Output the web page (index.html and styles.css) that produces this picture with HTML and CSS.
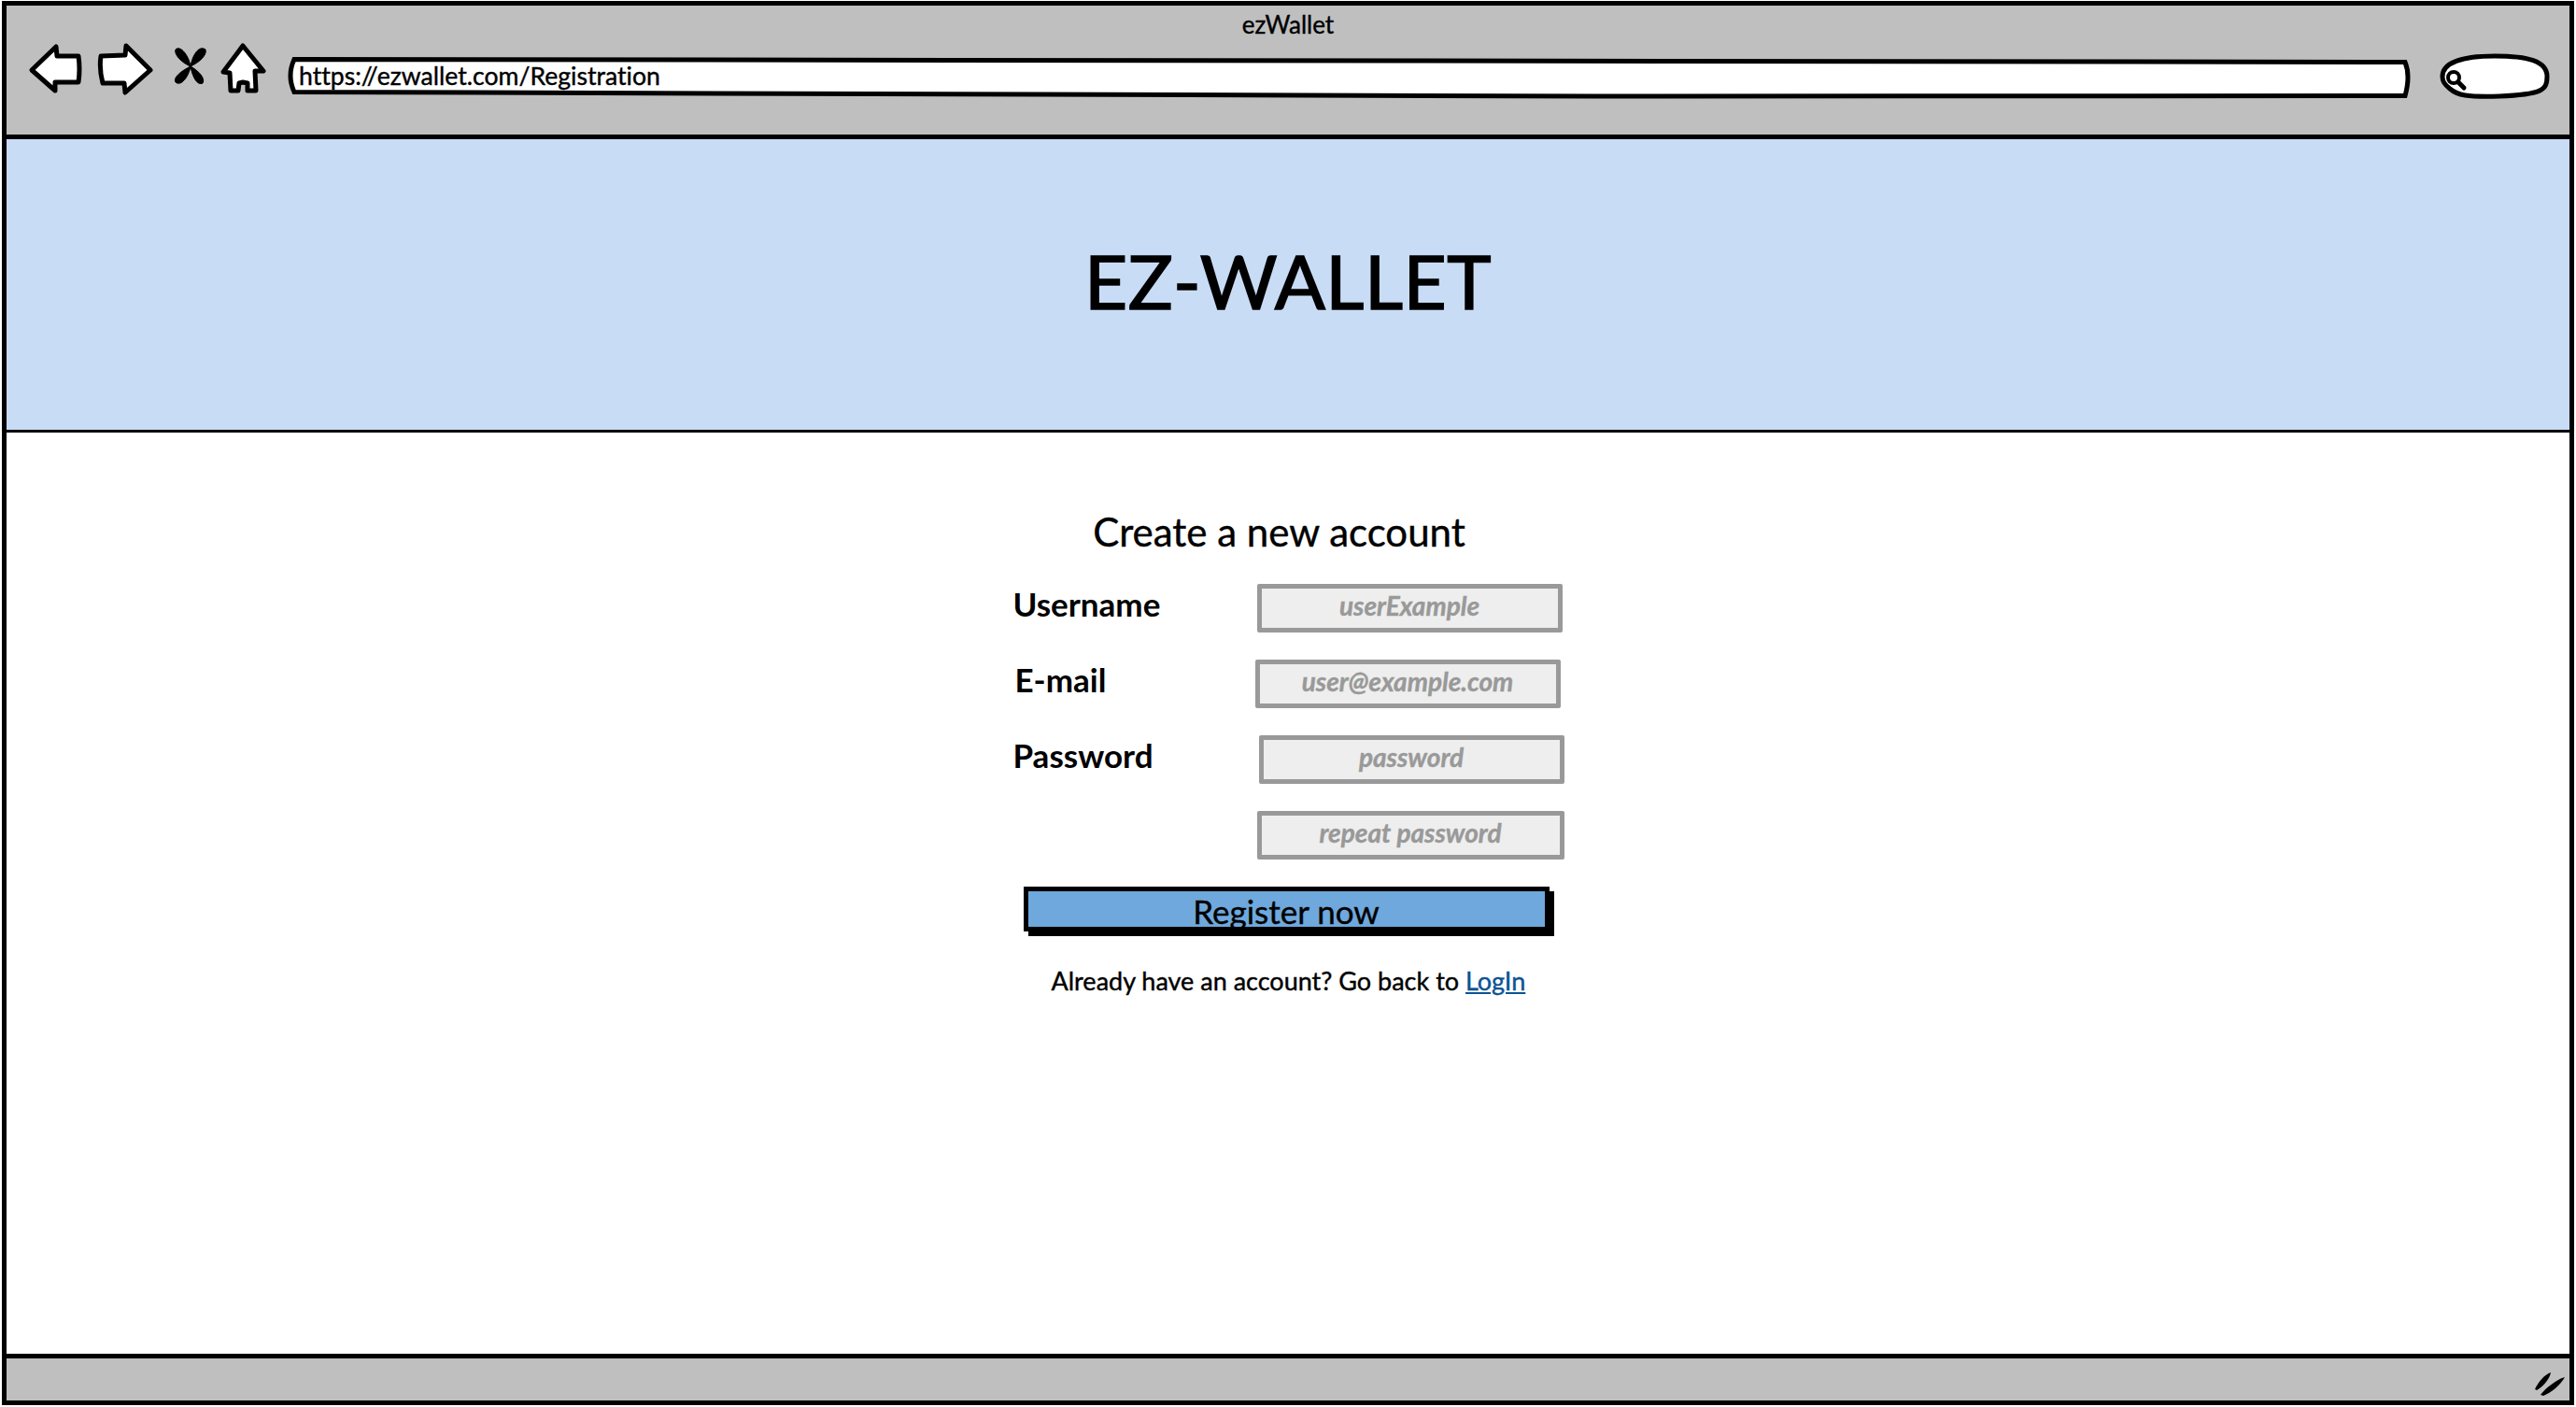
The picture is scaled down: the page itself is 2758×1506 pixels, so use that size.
FILE: index.html
```html
<!DOCTYPE html>
<html>
<head>
	<meta charset="UTF-8">
	<title>ezWallet</title>
	<link rel="stylesheet" href="styles.css">
</head>
<body>
	<div class="window">
		<div class="toolbar">
			<div class="window-title">ezWallet</div>
			<div class="nav-row">
				<svg class="icon icon-back" viewBox="0 0 60 56"><path d="M4 29 L30 4 L31 14 L54 14 Q56 28 54 42 L29 42 L29 51 Z"/></svg>
				<svg class="icon icon-forward" viewBox="0 0 63 56"><path d="M5 14 L31 13 L32 3 L58 29 L31 53 L30 43 L7 43 Q3 28 5 14 Z"/></svg>
				<svg class="icon icon-stop" viewBox="0 0 44 56"><path class="solid" d="M25 25 C15 21 7 12 9 7 C14 2 23 13 25 25 C27 13 34 2 41 7 C43 13 34 21 25 25 C34 30 41 38 38 43 C32 46 27 36 25 25 C23 36 15 47 9 42 C6 37 15 30 25 25 Z"/></svg>
				<svg class="icon icon-home" viewBox="0 0 52 56"><path d="M24 3 L46 30 L37 30 L38 51 L29 51 L29 43 L24 42 L20 43 L19 51 L11 51 L10 32 L3 31 Z"/></svg>
				<div class="url-bar">
					<svg class="url-outline" viewBox="0 0 2274 45" preserveAspectRatio="none"><path d="M6 2.5 L1200 4 L2268 5.5 Q2274 20 2268 41.5 L1400 42 L800 40 L6 37.5 Q-2 20 6 2.5 Z"/></svg>
					<span class="url-text">https://ezwallet.com/Registration</span>
				</div>
				<svg class="search" viewBox="0 0 120 50">
					<path d="M4 25 C4 10 25 3 60 3 C95 3 116 8 116 25 C116 40 110 44 65 46 C30 47 20 45 12 38 C6 33 4 30 4 25 Z"/>
					<circle cx="16" cy="26" r="6"/>
					<path class="handle" d="M21 31 L27 37"/>
				</svg>
			</div>
		</div>

		<div class="banner">
			<h1>EZ-WALLET</h1>
		</div>

		<div class="content">
			<form class="register-form">
				<h2>Create a new account</h2>
				<div class="field">
					<label for="username">Username</label>
					<input id="username" type="text" placeholder="userExample">
				</div>
				<div class="field">
					<label class="label-mail" for="email">E-mail</label>
					<input class="input-mail" id="email" type="text" placeholder="user@example.com">
				</div>
				<div class="field">
					<label for="password">Password</label>
					<input class="input-pass" id="password" type="text" placeholder="password">
				</div>
				<div class="field">
					<span></span>
					<input class="input-repeat" id="repeat" type="text" placeholder="repeat password">
				</div>
				<button type="button">Register now</button>
				<p class="login-line">Already have an account? Go back to <a href="#">LogIn</a></p>
			</form>
		</div>

		<div class="statusbar">
			<svg class="grip" viewBox="0 0 34 28">
				<path d="M1 20 C5 11 12 4 18 2 C17 9 9 18 3 21 Z"/>
				<path d="M7 26 C13 18 24 10 33 7 C29 15 18 24 10 27 Z"/>
			</svg>
		</div>
	</div>
</body>
</html>
```

FILE: styles.css
```css
* {
	box-sizing: border-box;
}

body {
	margin: 0;
	font-family: Lato, "Open Sans", sans-serif;
	font-variant-ligatures: none;
	-webkit-text-stroke: 0.4px;
	color: #000;
	background: #fff;
}

.window {
	display: flex;
	flex-direction: column;
	height: 1503px;
	margin: 1px 2px 0;
	border: 5px solid #000;
}

/* browser chrome */
.toolbar {
	height: 143px;
	background: #bfbfbf;
	border-bottom: 5px solid #000;
}

.window-title {
	height: 40px;
	padding-top: 4px;
	text-align: center;
	font-size: 26px;
	line-height: 32px;
}

.nav-row {
	display: flex;
	align-items: flex-start;
	padding: 0 20px 0 23px;
}

.icon {
	height: 56px;
	flex: none;
	margin-right: 13px;
}

.icon path {
	fill: #fff;
	stroke: #000;
	stroke-width: 5;
	stroke-linejoin: round;
}

.icon path.solid {
	fill: #000;
	stroke-width: 1;
}

.icon-back { width: 60px; }
.icon-forward { width: 63px; }
.icon-stop { width: 44px; }
.icon-home { width: 52px; margin-right: 21px; }

.url-bar {
	position: relative;
	flex: 1;
	height: 45px;
	margin-top: 15px;
	padding: 3px 0 0 11px;
	font-size: 26.6px;
	line-height: 34px;
}

.url-outline {
	position: absolute;
	top: 0;
	left: 0;
	width: 100%;
	height: 100%;
	overflow: visible;
}

.url-outline path {
	fill: #fff;
	stroke: #000;
	stroke-width: 5;
	vector-effect: non-scaling-stroke;
}

.url-text {
	position: relative;
}

.search {
	width: 120px;
	height: 50px;
	flex: none;
	margin: 11px 0 0 30px;
}

.search path {
	fill: #fff;
	stroke: #000;
	stroke-width: 5;
}

.search circle {
	fill: none;
	stroke: #000;
	stroke-width: 4;
}

.search path.handle {
	stroke-width: 5;
	stroke-linecap: round;
}

/* page header */
.banner {
	display: flex;
	align-items: center;
	justify-content: center;
	height: 314px;
	background: #c9dcf6;
	border-bottom: 3px solid #000;
}

.banner h1 {
	margin: 0 0 10px;
	font-size: 80px;
	font-weight: 400;
	line-height: 96px;
	letter-spacing: 0.5px;
	-webkit-text-stroke: 1.6px;
}

/* form */
.content {
	flex: 1;
	display: flex;
	justify-content: center;
}

.register-form {
	width: 590px;
	padding-top: 84px;
	margin-left: 1px;
}

.register-form h2 {
	margin: 0 0 34px;
	padding-right: 20px;
	font-size: 42px;
	font-weight: 400;
	line-height: 44px;
	text-align: center;
}

.field {
	display: flex;
	align-items: center;
	height: 52px;
	margin-bottom: 29px;
}

.field label,
.field span {
	width: 261px;
	flex: none;
	padding-bottom: 10px;
	font-size: 35px;
	font-weight: 700;
	-webkit-text-stroke: 0;
}

.field .label-mail {
	padding-left: 2px;
}

.field input {
	width: 327px;
	height: 52px;
	padding: 0 0 6px;
	background: #eee;
	border: 5px solid #999;
	border-radius: 2px;
	outline: none;
	text-align: center;
	font-family: inherit;
	font-size: 28px;
	font-style: italic;
	font-weight: 700;
}

.field input::placeholder {
	color: #999;
	opacity: 1;
}

.field .input-mail { margin-left: -2px; }
.field .input-pass { margin-left: 2px; }
.field .input-repeat { width: 329px; }

.register-form button {
	display: block;
	width: 563px;
	height: 48px;
	margin: 1px 0 0 11px;
	padding: 0 0 6px;
	background: #6fa8dc;
	border: 5px solid #000;
	box-shadow: 5px 5px 0 #000;
	font-family: inherit;
	font-size: 35px;
	color: #000;
}

.login-line {
	margin: 36px 0 0 41px;
	font-size: 27px;
	line-height: 34px;
}

.login-line a {
	color: #0b5394;
}

/* bottom bar */
.statusbar {
	display: flex;
	justify-content: flex-end;
	align-items: flex-end;
	height: 50px;
	padding: 0 4px 4px 0;
	background: #bfbfbf;
	border-top: 5px solid #000;
}

.grip {
	width: 34px;
	height: 28px;
}

.grip path {
	fill: #000;
}
```
